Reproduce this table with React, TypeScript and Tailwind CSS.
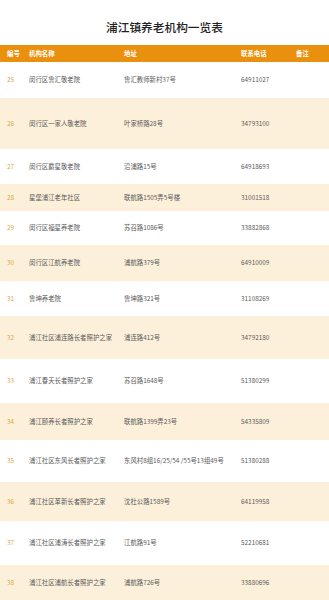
const rows: { no: string; name: string; addr: string; tel: string; h: string; alt: boolean }[] = [
  { no: "25", name: "闵行区鲁汇敬老院", addr: "鲁汇教师新村37号", tel: "64911027", h: "h-[36px]", alt: false },
  { no: "26", name: "闵行区一家人敬老院", addr: "叶家桥路28号", tel: "34793100", h: "h-[51px]", alt: true },
  { no: "27", name: "闵行区麝星敬老院", addr: "沿浦路15号", tel: "64918693", h: "h-[35px]", alt: false },
  { no: "28", name: "星堡浦江老年社区", addr: "联航路1505弄5号楼", tel: "31001518", h: "h-[27px]", alt: true },
  { no: "29", name: "闵行区福星养老院", addr: "苏召路1086号", tel: "33882868", h: "h-[34px]", alt: false },
  { no: "30", name: "闵行区江航养老院", addr: "浦航路379号", tel: "64910009", h: "h-[36px]", alt: true },
  { no: "31", name: "鲁坤养老院", addr: "鲁坤路321号", tel: "31108269", h: "h-[35px]", alt: false },
  { no: "32", name: "浦江社区浦连路长者照护之家", addr: "浦连路412号", tel: "34792180", h: "h-[43px]", alt: true },
  { no: "33", name: "浦江春天长者照护之家", addr: "苏召路1648号", tel: "51380299", h: "h-[44px]", alt: false },
  { no: "34", name: "浦江颐养长者照护之家", addr: "联航路1399弄23号", tel: "54335809", h: "h-[37px]", alt: true },
  { no: "35", name: "浦江社区东风长者照护之家", addr: "东风村8组16/25/54 /55号13组49号", tel: "51380288", h: "h-[42px]", alt: false },
  { no: "36", name: "浦江社区革新长者照护之家", addr: "沈杜公路1589号", tel: "64119958", h: "h-[39px]", alt: true },
  { no: "37", name: "浦江社区浦涛长者照护之家", addr: "江航路91号", tel: "52210681", h: "h-[44px]", alt: false },
  { no: "38", name: "浦江社区浦航长者照护之家", addr: "浦航路726号", tel: "33880696", h: "h-[36px]", alt: true },
];

export default function App() {
  return (
    <div className="w-[329px] h-[600px] overflow-hidden bg-white font-['Noto_Sans_CJK_SC',sans-serif]">
      {/* Title */}
      <div className="h-[45px] flex items-center justify-center pt-[9px]">
        <h1 className="text-[11.7px] font-medium text-[#222]">浦江镇养老机构一览表</h1>
      </div>

      {/* Header */}
      <div className="h-[17px] bg-[#e9900e] flex items-center text-[6.4px] font-bold text-white">
        <div className="w-[29px] pl-[7px]">编号</div>
        <div className="w-[95px]">机构名称</div>
        <div className="w-[117px]">地址</div>
        <div className="w-[55px]">联系电话</div>
        <div className="flex-1">备注</div>
      </div>

      {/* Rows */}
      {rows.map((r) => (
        <div
          key={r.no}
          className={`${r.h} flex items-center text-[6.4px] text-[#5a5a5a] ${r.alt ? "bg-[#fdf0da]" : "bg-white"}`}
        >
          <div className="w-[29px] pl-[7px] text-[#dba54b]">{r.no}</div>
          <div className="w-[95px]">{r.name}</div>
          <div className="w-[117px] whitespace-nowrap">{r.addr}</div>
          <div className="w-[55px]">{r.tel}</div>
          <div className="flex-1" />
        </div>
      ))}
    </div>
  );
}
